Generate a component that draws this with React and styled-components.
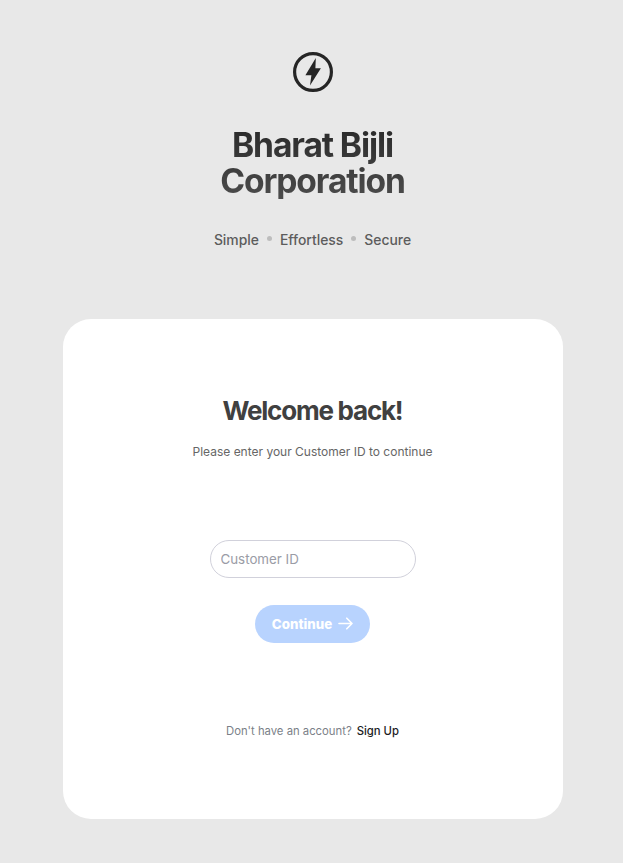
import React from "react";
import styled, { createGlobalStyle } from "styled-components";

const GlobalStyle = createGlobalStyle`
  *, *::before, *::after { box-sizing: border-box; }
  body { margin: 0; background: #e8e8e8; font-family: Inter, sans-serif; }
`;
const Page = styled.main`
  display: flex;
  flex-direction: column;
  align-items: center;
  height: 863px;
  padding: 52px 0 44px;
  padding-left: 2px;
  background: #e8e8e8;
`;
const Logo = styled.svg`
  display: block;
  flex: none;
  width: 40px;
  height: 40px;
`;
const Title = styled.h1`
  margin: 35px 0 0;
  font-size: 33.6px;
  line-height: 36px;
  font-weight: 700;
  letter-spacing: -1.1px;
  text-align: center;
  color: transparent;
  background: linear-gradient(#2a2a2a, #4c4c4c);
  background-clip: text;
`;
const Tagline = styled.div`
  display: flex;
  align-items: center;
  gap: 8px;
  margin-top: 31px;
  height: 20px;
  font-size: 13.9px;
  font-weight: 500;
  color: #5c5c5c;
`;
const Dot = styled.span`
  width: 5px;
  height: 5px;
  margin-top: -3px;
  border-radius: 50%;
  background: #bdbdbd;
`;
const Card = styled.section`
  display: flex;
  flex-direction: column;
  align-items: center;
  flex: none;
  width: 500px;
  height: 500px;
  margin-top: 69px;
  padding-top: 76px;
  border-radius: 28px;
  background: #fff;
`;
const Heading = styled.h2`
  margin: 0;
  font-size: 26px;
  line-height: 32px;
  font-weight: 700;
  letter-spacing: -1.22px;
  color: #404040;
`;
const Prompt = styled.p`
  margin: 16px 0 0;
  font-size: 12px;
  line-height: 18px;
  color: #666;
`;
const Input = styled.input`
  width: 206px;
  height: 38px;
  margin-top: 79px;
  padding: 0 10px;
  border: 1px solid #d1d1db;
  border-radius: 19px;
  font: 400 13.333px Inter, sans-serif;
  outline: none;
  &::placeholder { color: #9a9ca6; opacity: 1; }
`;
const Button = styled.button`
  display: flex;
  align-items: center;
  justify-content: center;
  gap: 6px;
  width: 115px;
  height: 38px;
  margin-top: 27px;
  padding: 0;
  border: 0;
  border-radius: 19px;
  background: #b8d3fe;
  color: #fff;
  font: 800 13.3px Inter, sans-serif;
`;
const Signup = styled.div`
  display: flex;
  gap: 5px;
  margin-top: 80px;
  font-size: 11.3px;
  line-height: 16px;
  color: #7b7f88;
`;
const SignupLink = styled.a`
  font-weight: 500;
  color: #1d1d1f;
`;

export default function App() {
  return (
    <>
      <GlobalStyle />
      <Page>
        <Logo viewBox="0 0 40 40">
          <circle cx="20" cy="20" r="18.4" fill="none" stroke="#252525" strokeWidth="3.2" />
          <path d="M22.8 6 12.4 23.2h6L17 33.6 27.9 16.2h-5.5z" fill="#252525" />
        </Logo>
        <Title>Bharat Bijli<br />Corporation</Title>
        <Tagline><span>Simple</span><Dot /><span>Effortless</span><Dot /><span>Secure</span></Tagline>
        <Card>
          <Heading>Welcome back!</Heading>
          <Prompt>Please enter your Customer ID to continue</Prompt>
          <Input placeholder="Customer ID" />
          <Button disabled>
            Continue
            <svg width="15" height="14" viewBox="0 0 15 14" fill="none" stroke="#fff" strokeWidth="1.6" strokeLinecap="round" strokeLinejoin="round">
              <path d="M1 6.5h13M8.8 1.2 14 6.5l-5.2 5.3" />
            </svg>
          </Button>
          <Signup><span>Don't have an account?</span><SignupLink>Sign Up</SignupLink></Signup>
        </Card>
      </Page>
    </>
  );
}
